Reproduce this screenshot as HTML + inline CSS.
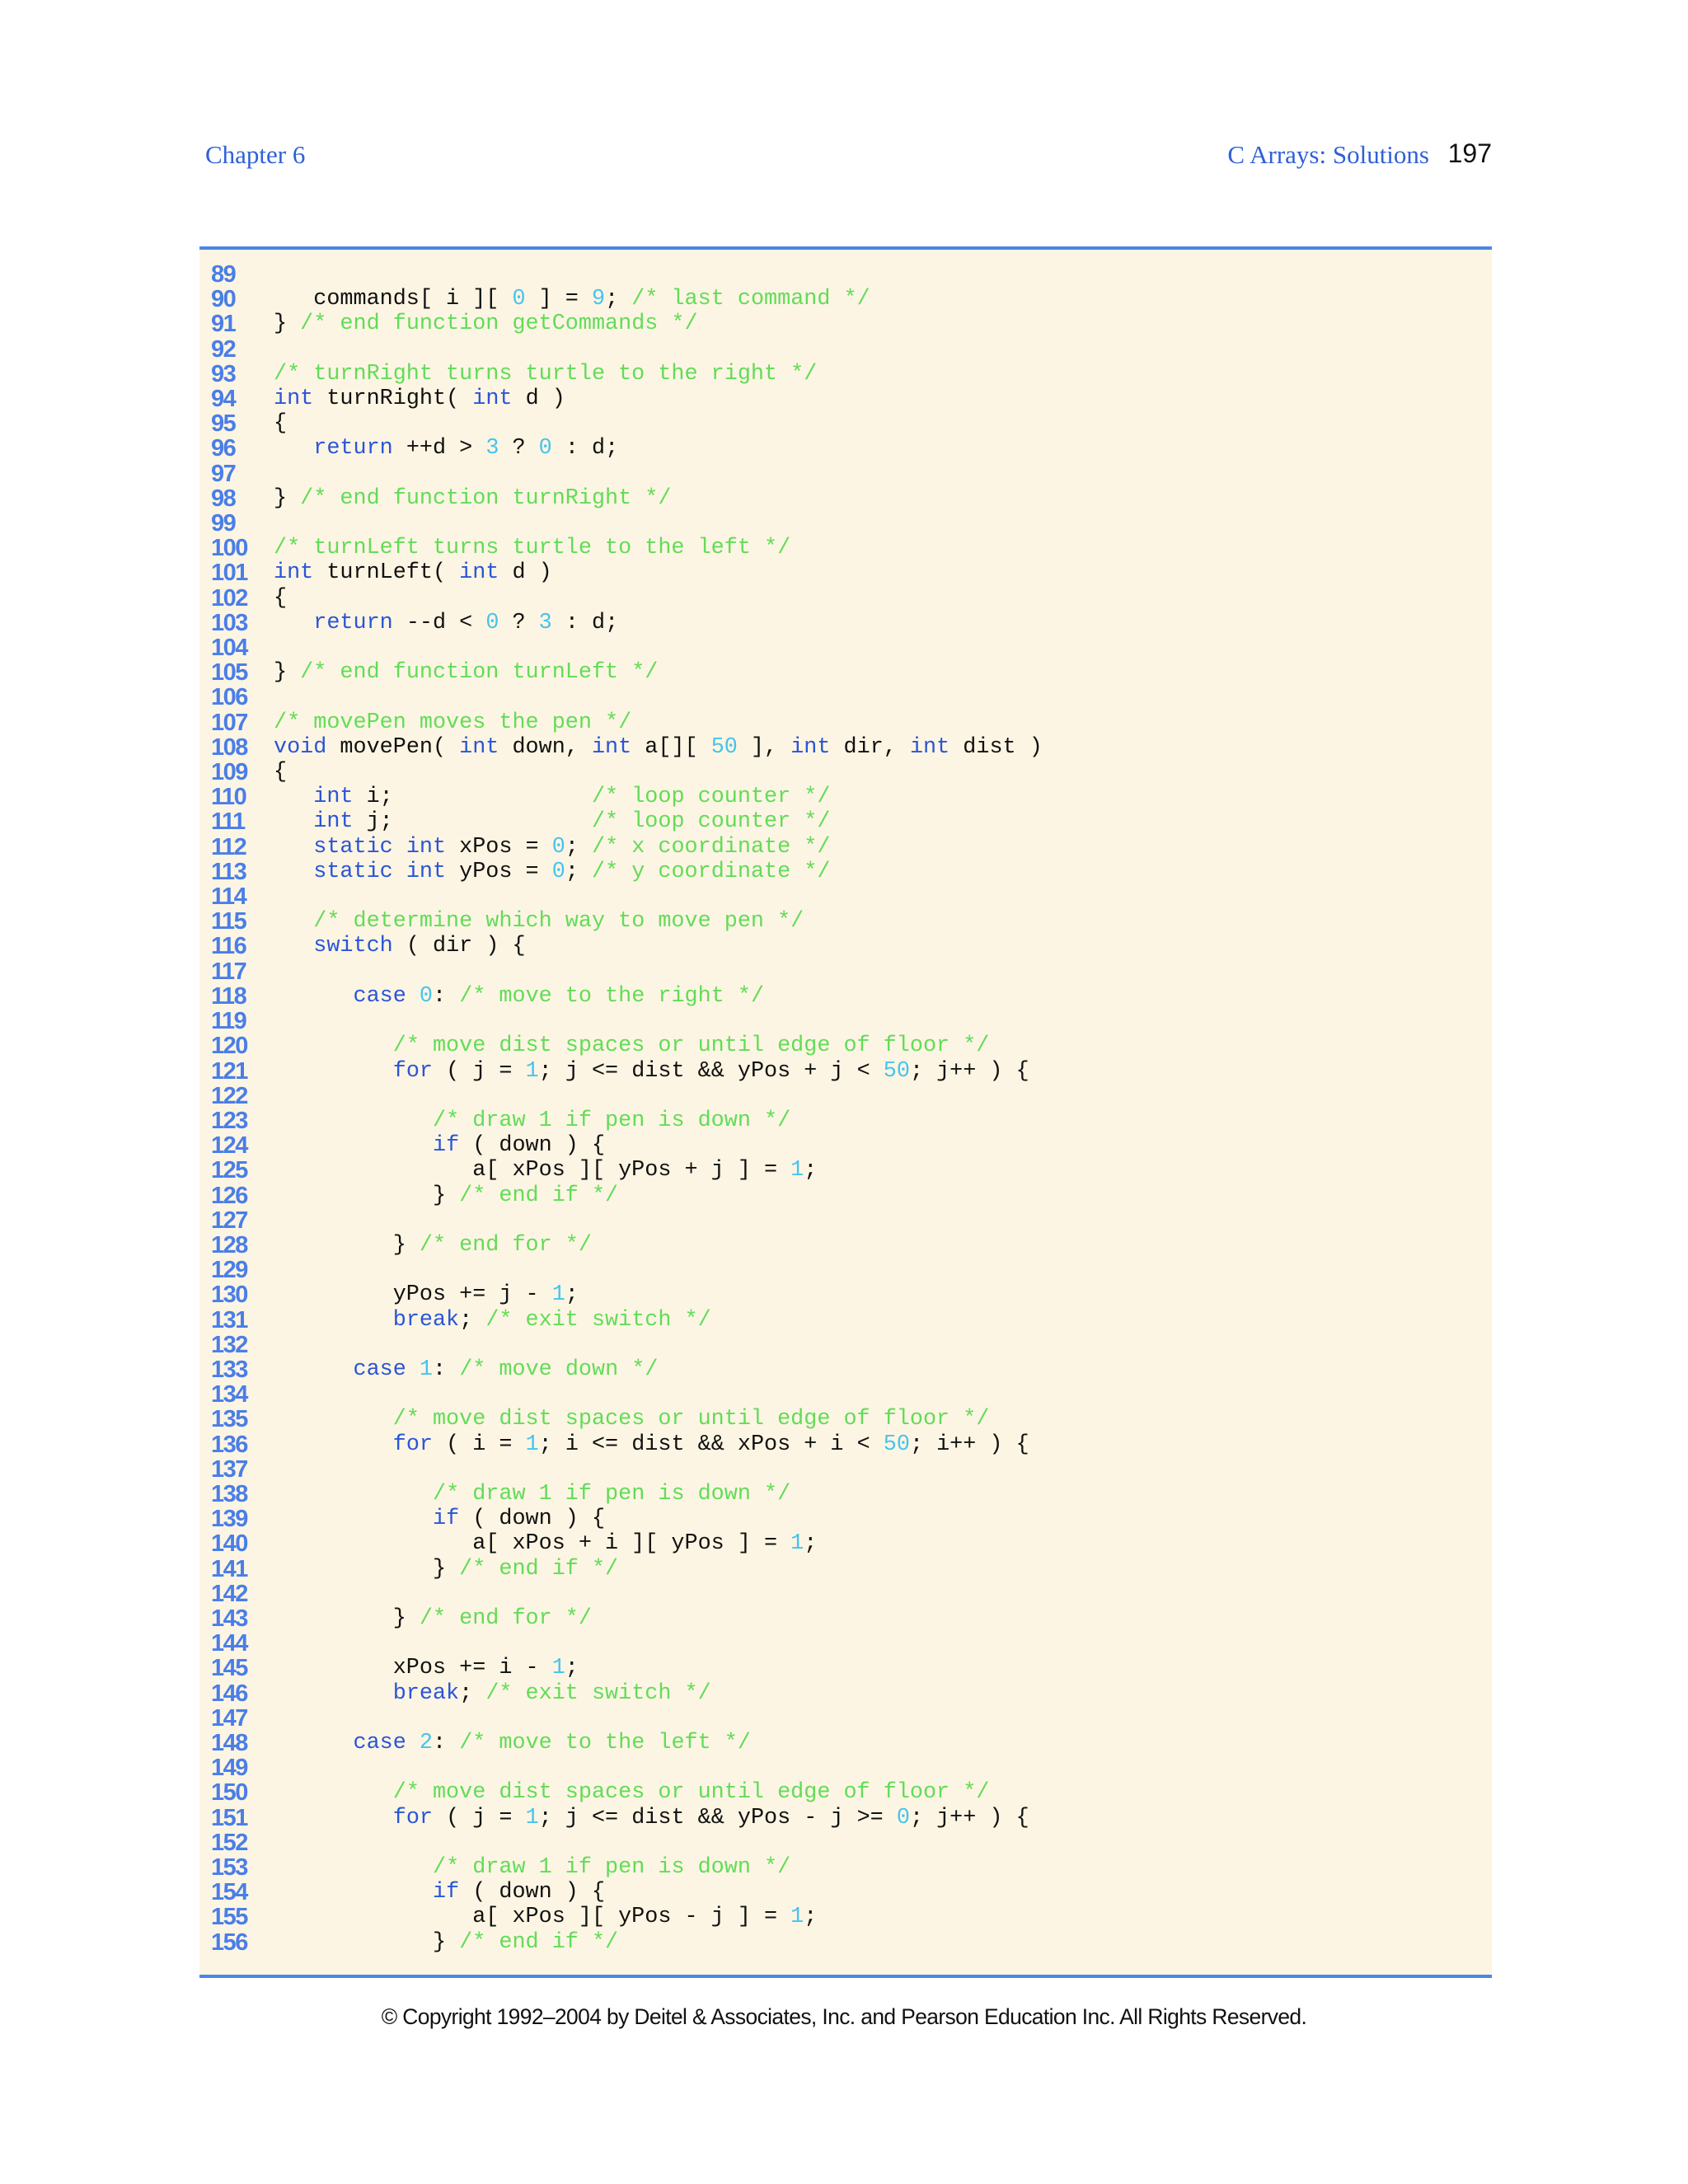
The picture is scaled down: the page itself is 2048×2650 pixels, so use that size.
<!DOCTYPE html>
<html><head><meta charset="utf-8"><style>
html,body{margin:0;padding:0;background:#fff;}
body{width:2048px;height:2650px;position:relative;overflow:hidden;}
.hl{position:absolute;top:170px;left:249px;font:31px "Liberation Serif",serif;color:#3060d8;}
.hr{position:absolute;top:170px;right:314px;font:31px "Liberation Serif",serif;color:#3060d8;}
.pg{position:absolute;top:168px;right:238px;font:32px "Liberation Sans",sans-serif;color:#111;}
.box{position:absolute;left:242px;top:299px;width:1568px;height:2101px;background:#fdf5e3;border-top:4px solid #4a86e8;border-bottom:4px solid #4a86e8;box-sizing:border-box;}
.nums{position:absolute;left:256px;top:318px;font:bold 29px/30.2px "Liberation Sans",sans-serif;color:#4a7ee8;letter-spacing:-1.5px;white-space:pre;margin:0;}
.code{position:absolute;left:332px;top:318px;font:26.8px/30.2px "Liberation Mono",monospace;color:#111;white-space:pre;margin:0;}
.k{color:#2a55d8}.c{color:#62dc58}.n{color:#44c4ee}
.foot{position:absolute;top:2432px;left:0;width:2048px;text-align:center;font:26.4px "Liberation Sans",sans-serif;color:#111;letter-spacing:-0.6px;}
</style></head><body>
<div class="hl">Chapter 6</div>
<div class="hr">C Arrays: Solutions</div>
<div class="pg">197</div>
<div class="box"></div>
<pre class="nums">89
90
91
92
93
94
95
96
97
98
99
100
101
102
103
104
105
106
107
108
109
110
111
112
113
114
115
116
117
118
119
120
121
122
123
124
125
126
127
128
129
130
131
132
133
134
135
136
137
138
139
140
141
142
143
144
145
146
147
148
149
150
151
152
153
154
155
156</pre>
<pre class="code">

   commands[ i ][ <span class="n">0</span> ] = <span class="n">9</span>; <span class="c">/* last command */</span>
} <span class="c">/* end function getCommands */</span>

<span class="c">/* turnRight turns turtle to the right */</span>
<span class="k">int</span> turnRight( <span class="k">int</span> d )
{
   <span class="k">return</span> ++d &gt; <span class="n">3</span> ? <span class="n">0</span> : d;

} <span class="c">/* end function turnRight */</span>

<span class="c">/* turnLeft turns turtle to the left */</span>
<span class="k">int</span> turnLeft( <span class="k">int</span> d )
{
   <span class="k">return</span> --d &lt; <span class="n">0</span> ? <span class="n">3</span> : d;

} <span class="c">/* end function turnLeft */</span>

<span class="c">/* movePen moves the pen */</span>
<span class="k">void</span> movePen( <span class="k">int</span> down, <span class="k">int</span> a[][ <span class="n">50</span> ], <span class="k">int</span> dir, <span class="k">int</span> dist )
{
   <span class="k">int</span> i;               <span class="c">/* loop counter */</span>
   <span class="k">int</span> j;               <span class="c">/* loop counter */</span>
   <span class="k">static int</span> xPos = <span class="n">0</span>; <span class="c">/* x coordinate */</span>
   <span class="k">static int</span> yPos = <span class="n">0</span>; <span class="c">/* y coordinate */</span>

   <span class="c">/* determine which way to move pen */</span>
   <span class="k">switch</span> ( dir ) {

      <span class="k">case</span> <span class="n">0</span>: <span class="c">/* move to the right */</span>

         <span class="c">/* move dist spaces or until edge of floor */</span>
         <span class="k">for</span> ( j = <span class="n">1</span>; j &lt;= dist &amp;&amp; yPos + j &lt; <span class="n">50</span>; j++ ) {

            <span class="c">/* draw 1 if pen is down */</span>
            <span class="k">if</span> ( down ) {
               a[ xPos ][ yPos + j ] = <span class="n">1</span>;
            } <span class="c">/* end if */</span>

         } <span class="c">/* end for */</span>

         yPos += j - <span class="n">1</span>;
         <span class="k">break</span>; <span class="c">/* exit switch */</span>

      <span class="k">case</span> <span class="n">1</span>: <span class="c">/* move down */</span>

         <span class="c">/* move dist spaces or until edge of floor */</span>
         <span class="k">for</span> ( i = <span class="n">1</span>; i &lt;= dist &amp;&amp; xPos + i &lt; <span class="n">50</span>; i++ ) {

            <span class="c">/* draw 1 if pen is down */</span>
            <span class="k">if</span> ( down ) {
               a[ xPos + i ][ yPos ] = <span class="n">1</span>;
            } <span class="c">/* end if */</span>

         } <span class="c">/* end for */</span>

         xPos += i - <span class="n">1</span>;
         <span class="k">break</span>; <span class="c">/* exit switch */</span>

      <span class="k">case</span> <span class="n">2</span>: <span class="c">/* move to the left */</span>

         <span class="c">/* move dist spaces or until edge of floor */</span>
         <span class="k">for</span> ( j = <span class="n">1</span>; j &lt;= dist &amp;&amp; yPos - j &gt;= <span class="n">0</span>; j++ ) {

            <span class="c">/* draw 1 if pen is down */</span>
            <span class="k">if</span> ( down ) {
               a[ xPos ][ yPos - j ] = <span class="n">1</span>;
            } <span class="c">/* end if */</span></pre>
<div class="foot">© Copyright 1992–2004 by Deitel &amp; Associates, Inc. and Pearson Education Inc. All Rights Reserved.</div>
</body></html>
